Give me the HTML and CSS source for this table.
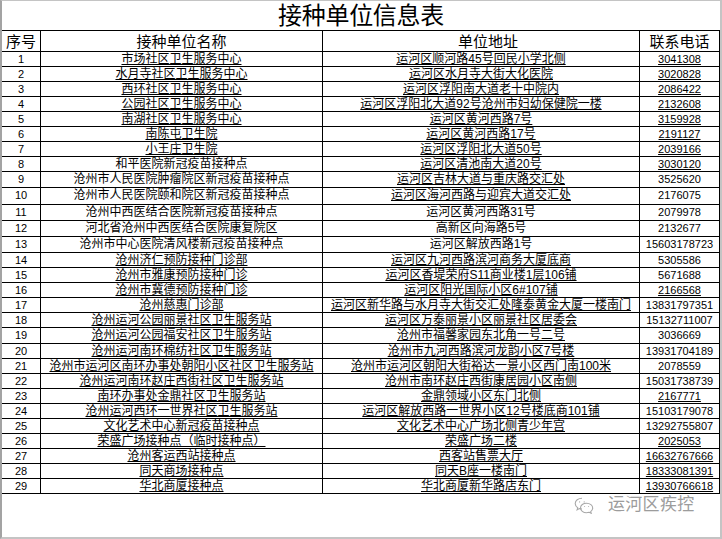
FILE: index.html
```html
<!DOCTYPE html>
<html lang="zh">
<head>
<meta charset="utf-8">
<title>接种单位信息表</title>
<link rel="stylesheet" href="styles.css">
</head>
<body>
<div class="sheet">
  <div class="title">接种单位信息表</div>
  <div class="grid">
    <div class="hd">序号</div><div class="hd">接种单位名称</div><div class="hd hd-addr">单位地址</div><div class="hd">联系电话</div>

    <div class="c num">1</div><div class="c u">市场社区卫生服务中心</div><div class="c u">运河区顺河路45号回民小学北侧</div><div class="c u tel">3041308</div>
    <div class="c num">2</div><div class="c u">水月寺社区卫生服务中心</div><div class="c u">运河区水月寺大街大化医院</div><div class="c u tel">3020828</div>
    <div class="c num">3</div><div class="c u">西环社区卫生服务中心</div><div class="c u">运河区浮阳南大道老十中院内</div><div class="c u tel">2086422</div>
    <div class="c num">4</div><div class="c u">公园社区卫生服务中心</div><div class="c u">运河区浮阳北大道92号沧州市妇幼保健院一楼</div><div class="c u tel">2132608</div>
    <div class="c num">5</div><div class="c u">南湖社区卫生服务中心</div><div class="c u">运河区黄河西路7号</div><div class="c u tel">3159928</div>
    <div class="c num">6</div><div class="c u">南陈屯卫生院</div><div class="c u">运河区黄河西路17号</div><div class="c u tel">2191127</div>
    <div class="c num">7</div><div class="c u">小王庄卫生院</div><div class="c u">运河区浮阳北大道50号</div><div class="c u tel">2039166</div>
    <div class="c num">8</div><div class="c">和平医院新冠疫苗接种点</div><div class="c u">运河区清池南大道20号</div><div class="c u tel">3030120</div>
    <div class="c num">9</div><div class="c">沧州市人民医院肿瘤院区新冠疫苗接种点</div><div class="c u">运河区吉林大道与重庆路交汇处</div><div class="c tel">3525620</div>
    <div class="c num">10</div><div class="c">沧州市人民医院颐和院区新冠疫苗接种点</div><div class="c u">运河区海河西路与迎宾大道交汇处</div><div class="c tel">2176075</div>
    <div class="c num">11</div><div class="c">沧州中西医结合医院新冠疫苗接种点</div><div class="c">运河区黄河西路31号</div><div class="c tel">2079978</div>
    <div class="c num">12</div><div class="c">河北省沧州中西医结合医院康复院区</div><div class="c">高新区向海路5号</div><div class="c tel">2132677</div>
    <div class="c num">13</div><div class="c">沧州市中心医院清风楼新冠疫苗接种点</div><div class="c">运河区解放西路1号</div><div class="c tel">15603178723</div>
    <div class="c num">14</div><div class="c u">沧州济仁预防接种门诊部</div><div class="c u">运河区九河西路滨河商务大厦底商</div><div class="c tel">5305586</div>
    <div class="c num">15</div><div class="c u">沧州市雅康预防接种门诊</div><div class="c u">运河区香堤荣府S11商业楼1层106铺</div><div class="c tel">5671688</div>
    <div class="c num">16</div><div class="c u">沧州市冀德预防接种门诊</div><div class="c u">运河区阳光国际小区6#107铺</div><div class="c u tel">2166568</div>
    <div class="c num">17</div><div class="c u">沧州慈惠门诊部</div><div class="c u">运河区新华路与水月寺大街交汇处隆泰黄金大厦一楼南门</div><div class="c tel">13831797351</div>
    <div class="c num">18</div><div class="c u">沧州运河公园丽景社区卫生服务站</div><div class="c u">运河区万泰丽景小区丽景社区居委会</div><div class="c tel">15132711007</div>
    <div class="c num">19</div><div class="c u">沧州运河公园福安社区卫生服务站</div><div class="c u">沧州市福馨家园东北角一号二号</div><div class="c tel">3036669</div>
    <div class="c num">20</div><div class="c u">沧州运河南环棉纺社区卫生服务站</div><div class="c u">沧州市九河西路滨河龙韵小区7号楼</div><div class="c tel">13931704189</div>
    <div class="c num">21</div><div class="c u">沧州市运河区南环办事处朝阳小区社区卫生服务站</div><div class="c u">沧州市运河区朝阳大街裕达一景小区西门南100米</div><div class="c tel">2078559</div>
    <div class="c num">22</div><div class="c u">沧州运河南环赵庄西街社区卫生服务站</div><div class="c u">沧州市南环赵庄西街康居园小区南侧</div><div class="c tel">15031738739</div>
    <div class="c num">23</div><div class="c u">南环办事处金鼎社区卫生服务站</div><div class="c u">金鼎领域小区东门北侧</div><div class="c u tel">2167771</div>
    <div class="c num">24</div><div class="c u">沧州运河西环一世界社区卫生服务站</div><div class="c u">运河区解放西路一世界小区12号楼底商101铺</div><div class="c tel">15103179078</div>
    <div class="c num">25</div><div class="c u">文化艺术中心新冠疫苗接种点</div><div class="c u">文化艺术中心广场北侧青少年宫</div><div class="c tel">13292755807</div>
    <div class="c num">26</div><div class="c u">荣盛广场接种点（临时接种点）</div><div class="c u">荣盛广场二楼</div><div class="c u tel">2025053</div>
    <div class="c num">27</div><div class="c u">沧州客运西站接种点</div><div class="c u">西客站售票大厅</div><div class="c u tel">16632767666</div>
    <div class="c num">28</div><div class="c u">同天商场接种点</div><div class="c u">同天B座一楼南门</div><div class="c u tel">18333081391</div>
    <div class="c num">29</div><div class="c u">华北商厦接种点</div><div class="c u">华北商厦新华路店东门</div><div class="c u tel">13930766618</div>
  </div>

  <div class="mark">
    <svg class="mark-icon" width="20" height="17" viewBox="0 0 20 17" fill="none" stroke="#a8a8a8" stroke-width="1.1">
      <path d="M8 1.2C4.2 1.2 1.2 3.6 1.2 6.6c0 1.7 1 3.2 2.5 4.2l-.6 2 2.3-1.2c.8.2 1.7.4 2.6.4"/>
      <path d="M12.6 6.2c3.4 0 6.1 2.1 6.1 4.8 0 1.4-.8 2.7-2 3.6l.5 1.7-2-1c-.8.2-1.7.4-2.6.4-3.4 0-6.1-2.1-6.1-4.8s2.7-4.7 6.1-4.7z"/>
      <circle cx="5.6" cy="4.9" r=".6" fill="#a8a8a8" stroke="none"/>
      <circle cx="10.2" cy="4.9" r=".6" fill="#a8a8a8" stroke="none"/>
      <circle cx="10.6" cy="9.6" r=".5" fill="#a8a8a8" stroke="none"/>
      <circle cx="14.6" cy="9.6" r=".5" fill="#a8a8a8" stroke="none"/>
    </svg>
    <span class="mark-text">运河区疾控</span>
  </div>
</div>
</body>
</html>
```

FILE: styles.css
```css
html, body {
  margin: 0;
  padding: 0;
  background: #ffffff;
}

.sheet {
  position: relative;
  width: 722px;
  height: 539px;
  box-sizing: border-box;
  border-left: 2px solid #a3a3a3;
  border-right: 2px solid #c4c4c4;
  border-top: 1px solid #c4c4c4;
  border-bottom: 2px solid #c4c4c4;
  background: #ffffff;
  font-family: "Liberation Sans", "Noto Sans CJK SC", sans-serif;
  color: #000;
  overflow: hidden;
}

.title {
  height: 29px;
  box-sizing: border-box;
  padding-top: 1px;
  text-align: center;
  font-size: 24px;
  line-height: 28px;
  letter-spacing: -0.3px;
}

.grid {
  display: grid;
  grid-template-columns: 39px 282px 317px 80px;
  grid-template-rows: 21px repeat(8, 15px) 16px 17px 16px 16px 16px repeat(5, 15px) 16px repeat(10, 15px);
  border-top: 1px solid #000;
}

.hd,
.c {
  box-sizing: border-box;
  border-right: 1px solid #000;
  border-bottom: 1px solid #000;
  text-align: center;
  white-space: nowrap;
  overflow: hidden;
}

.hd {
  font-size: 15px;
  line-height: 18px;
  padding-top: 2px;
}

.hd-addr {
  padding-left: 14px;
}

.c {
  font-size: 12px;
  line-height: 14px;
  padding-top: 0;
}

.num,
.tel {
  font-size: 11px;
}

.u {
  text-decoration: underline;
  text-underline-offset: 1px;
}

.mark {
  position: absolute;
  left: 572px;
  top: 494px;
  display: flex;
  align-items: center;
  gap: 14px;
}

.mark-icon {
  display: block;
}

.mark-text {
  font-size: 17px;
  line-height: 20px;
  color: #9c9c9c;
  letter-spacing: 0.3px;
  text-shadow: 0 0 1px #ffffff;
}
```
